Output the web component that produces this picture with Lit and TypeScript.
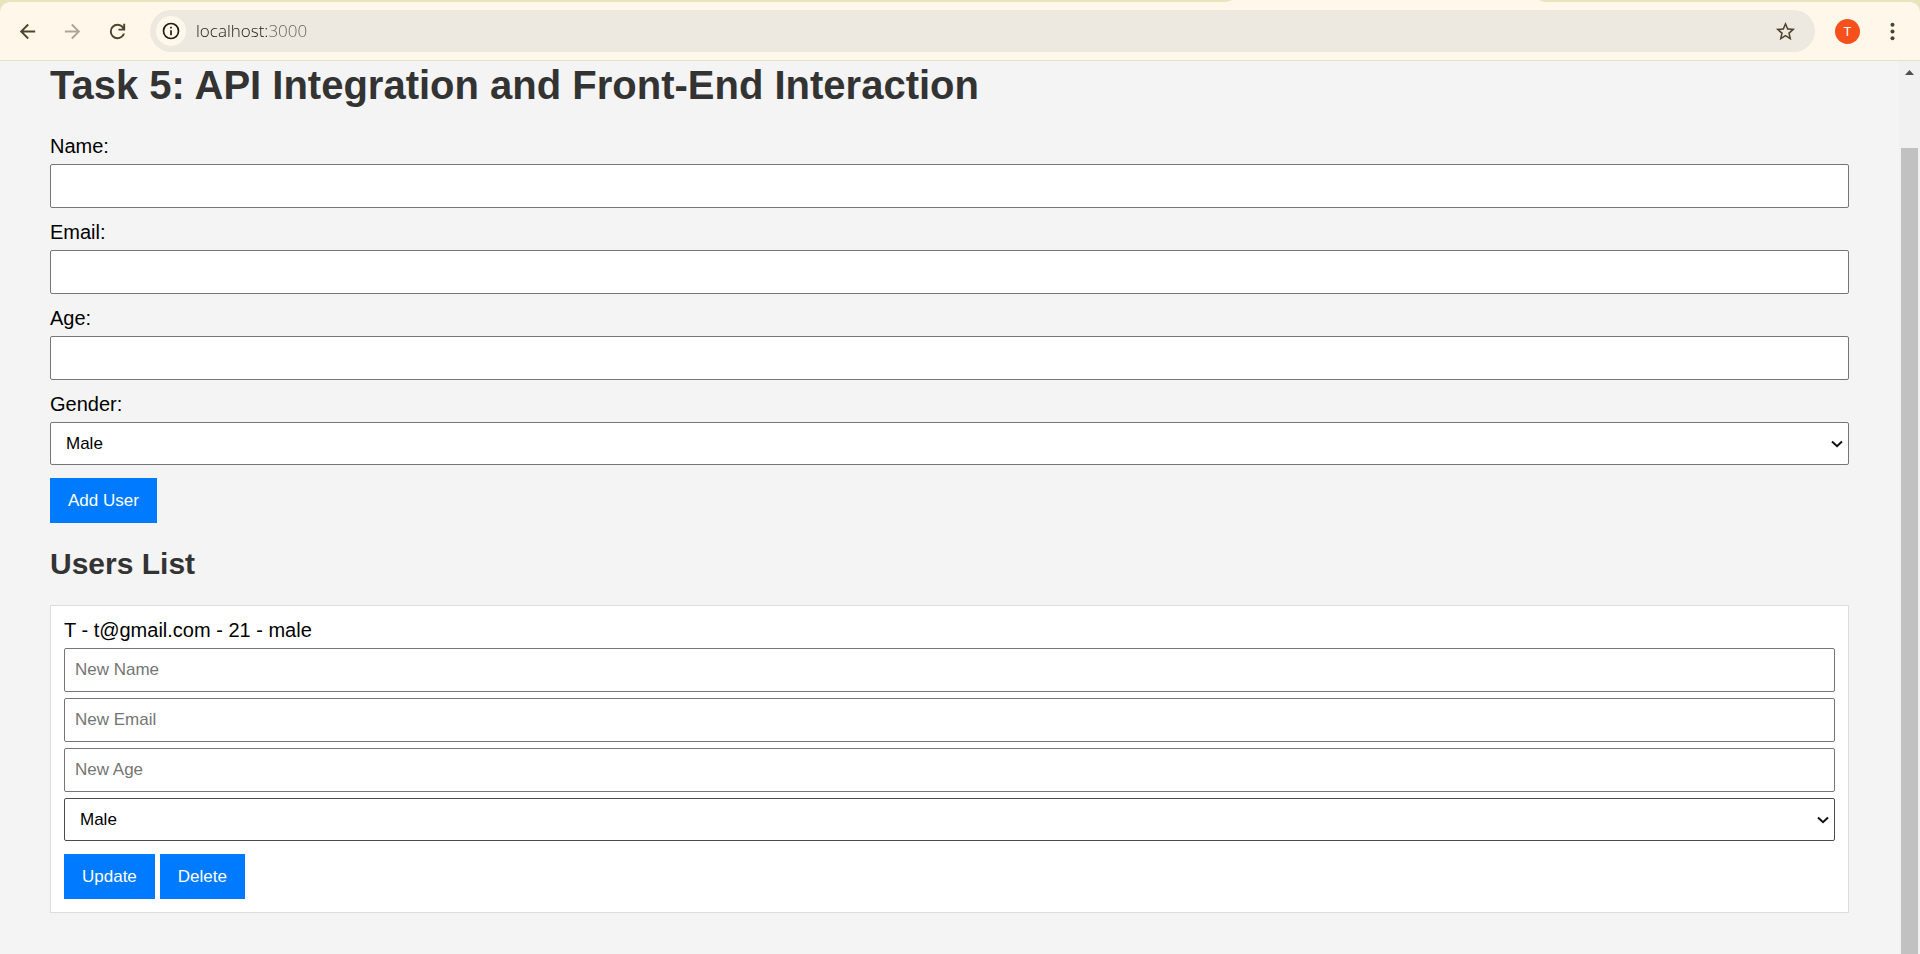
import { LitElement, html, css } from "lit";
import { customElement, property } from "lit/decorators.js";

interface User {
  name: string;
  email: string;
  age: number;
  gender: string;
}

const controls = css`
  * {
    box-sizing: border-box;
  }
  .field {
    display: block;
    width: 100%;
    height: 44px;
    margin: 0;
    padding: 0 10px;
    border: 1px solid #767676;
    border-radius: 2px;
    background: #fff;
    color: #000;
    font: 17px/20px "Liberation Sans", Arial, sans-serif;
  }
  .field::placeholder {
    color: #757575;
  }
  .field.active {
    border-color: #4c4c4c;
  }
  .picker {
    display: grid;
    align-items: center;
  }
  .picker > * {
    grid-area: 1 / 1;
  }
  .picker .field {
    appearance: none;
    height: 43px;
    padding: 0 32px 0 15px;
  }
  .picker svg {
    justify-self: end;
    width: 12px;
    height: 8px;
    margin-right: 6px;
    pointer-events: none;
  }
  .action {
    height: 45px;
    padding: 0 18px;
    border: 0;
    background: #007bff;
    color: #fff;
    font: 17px/20px "Liberation Sans", Arial, sans-serif;
    cursor: pointer;
  }
`;

const chevron = html`<svg viewBox="0 0 12 8" aria-hidden="true">
  <path d="M1 1.5 6 6.2 11 1.5" fill="none" stroke="#111" stroke-width="2" />
</svg>`;

const genderOptions = html`
  <option value="male">Male</option>
  <option value="female">Female</option>
  <option value="other">Other</option>
`;

@customElement("browser-bar")
export class BrowserBar extends LitElement {
  static styles = css`
    * {
      box-sizing: border-box;
    }
    :host {
      display: block;
      background: #ebe3bd;
    }
    .strip {
      display: flex;
      justify-content: flex-end;
      height: 2px;
      padding-right: 374px;
    }
    .tab {
      display: block;
      width: 322px;
      height: 2px;
    }
    .bar {
      display: flex;
      align-items: center;
      height: 59px;
      padding: 0 10px;
      border-bottom: 1px solid #e6e0c8;
      border-radius: 10px 10px 0 0;
      background: #fff8ea;
    }
    .nav {
      display: flex;
      gap: 10px;
    }
    .icon {
      display: grid;
      place-items: center;
      width: 35px;
      height: 35px;
      padding: 0;
      border: 0;
      background: none;
      color: #4c452b;
    }
    .icon:disabled {
      color: #aba794;
    }
    .icon svg {
      width: 23px;
      height: 23px;
      fill: currentColor;
    }
    .address {
      display: flex;
      flex: 1;
      align-items: center;
      height: 42px;
      margin: 0 20px 0 15px;
      padding: 0 12px 0 6px;
      border-radius: 21px;
      background: #ede8e0;
    }
    .address .info {
      width: 30px;
      height: 30px;
      border-radius: 50%;
      background: #fff8ea;
      color: #1f1b12;
    }
    .info svg {
      width: 20px;
      height: 20px;
    }
    .url {
      flex: 1;
      min-width: 0;
      margin-left: 10px;
      padding: 0;
      border: 0;
      outline: 0;
      background: linear-gradient(90deg, #1f1b12 72px, #625d55 72px) text;
      color: transparent;
      font: 300 17px/24px "Open Sans", "Noto Sans", sans-serif;
    }
    .avatar {
      width: 25px;
      height: 25px;
      margin-right: 15px;
      padding: 0;
      border: 0;
      border-radius: 50%;
      background: #f6511d;
      color: #fff;
      font: 13px/25px Roboto, sans-serif;
    }
  `;

  @property() url = "";

  render() {
    return html`
      <div class="strip">
        <svg class="tab" viewBox="0 0 322 2" aria-hidden="true">
          <path d="M0 2Q5 1.800 8 0H315Q318 1.800 322 2Z" fill="#fff8ea" />
        </svg>
      </div>
      <div class="bar">
        <div class="nav">
          <button class="icon" aria-label="Back">
            <svg viewBox="0 0 24 24">
              <path d="M20 11H7.83l5.59-5.59L12 4l-8 8 8 8 1.41-1.41L7.83 13H20z" />
            </svg>
          </button>
          <button class="icon" aria-label="Forward" disabled>
            <svg viewBox="0 0 24 24">
              <path d="m12 4-1.41 1.41L16.17 11H4v2h12.17l-5.58 5.59L12 20l8-8z" />
            </svg>
          </button>
          <button class="icon" aria-label="Reload">
            <svg viewBox="0 0 24 24">
              <path
                d="M12 20q-3.35 0-5.67-2.33T4 12t2.33-5.67T12 4q1.73 0 3.3.71T18 6.75V4h2v7h-7V9h4.2q-.8-1.4-2.19-2.2T12 6Q9.500 6 7.750 7.750T6 12t1.750 4.250T12 18q1.930 0 3.480-1.100T17.650 14h2.100q-.700 2.650-2.850 4.330T12 20z"
              />
            </svg>
          </button>
        </div>
        <div class="address">
          <button class="icon info" aria-label="View site information">
            <svg viewBox="0 0 24 24">
              <path
                d="M11 7h2v2h-2zm0 4h2v6h-2zm1-9a10 10 0 1 0 0 20 10 10 0 0 0 0-20zm0 18a8 8 0 1 1 0-16 8 8 0 0 1 0 16z"
              />
            </svg>
          </button>
          <input class="url" type="text" aria-label="Address" .value=${this.url} />
          <button class="icon" aria-label="Bookmark this page">
            <svg viewBox="0 0 24 24">
              <path
                d="m22 9.240-7.190-.620L12 2 9.190 8.630 2 9.240l5.460 4.730L5.820 21 12 17.270 18.180 21l-1.630-7.030zM12 15.400l-3.760 2.270 1-4.280-3.320-2.880 4.380-.380L12 6.100l1.710 4.040 4.380.380-3.320 2.880 1 4.280z"
              />
            </svg>
          </button>
        </div>
        <button class="avatar" aria-label="Profile T">T</button>
        <button class="icon" aria-label="Menu">
          <svg viewBox="0 0 24 24">
            <circle cx="12" cy="5" r="2.100" />
            <circle cx="12" cy="12" r="2.100" />
            <circle cx="12" cy="19" r="2.100" />
          </svg>
        </button>
      </div>
    `;
  }
}

@customElement("user-card")
export class UserCard extends LitElement {
  static styles = [
    controls,
    css`
      :host {
        display: block;
      }
      .card {
        display: grid;
        gap: 6px;
        padding: 13px;
        border: 1px solid #ddd;
        background: #fff;
      }
      .summary {
        line-height: 23px;
      }
      .actions {
        display: flex;
        gap: 5px;
        padding-top: 7px;
      }
    `,
  ];

  @property({ attribute: false }) user!: User;

  render() {
    const { name, email, age, gender } = this.user;
    return html`
      <div class="card">
        <div class="summary">${name} - ${email} - ${age} - ${gender}</div>
        <input class="field" type="text" placeholder="New Name" aria-label="New Name" />
        <input class="field" type="email" placeholder="New Email" aria-label="New Email" />
        <input class="field" type="number" placeholder="New Age" aria-label="New Age" />
        <div class="picker">
          <select class="field active" aria-label="New Gender">
            ${genderOptions}
          </select>
          ${chevron}
        </div>
        <div class="actions">
          <button class="action" type="button">Update</button>
          <button class="action" type="button">Delete</button>
        </div>
      </div>
    `;
  }
}

@customElement("app-root")
export class AppRoot extends LitElement {
  static styles = [
    controls,
    css`
      :host {
        display: flex;
        flex-direction: column;
        min-height: 100vh;
        background: #f4f4f4;
        color: #000;
        font: 20px/23px "Liberation Sans", Arial, sans-serif;
      }
      .view {
        display: flex;
        flex: 1;
      }
      .page {
        flex: 1;
        min-width: 0;
        padding: 1px 50px 0;
      }
      .title,
      .subtitle {
        margin: 0;
        color: #333;
        font-weight: bold;
      }
      .title {
        margin-bottom: 27px;
        font-size: 40px;
        line-height: 46px;
      }
      .subtitle {
        margin: 23px 0 24px;
        font-size: 30px;
        line-height: 35px;
      }
      .form {
        display: grid;
        justify-items: start;
        gap: 13px;
      }
      .row {
        display: grid;
        gap: 6px;
        width: 100%;
      }
      .users {
        margin: 0;
        padding: 0;
        list-style: none;
      }
      .scrollbar {
        display: flex;
        flex-direction: column;
        align-items: center;
        width: 21px;
        background: #f1f1f1;
      }
      .scrollbar svg {
        width: 9px;
        height: 5px;
        margin: 9px 0 73px;
      }
      .thumb {
        flex: 1;
        width: 17px;
        background: #c1c1c1;
      }
    `,
  ];

  private users: User[] = [{ name: "T", email: "t@gmail.com", age: 21, gender: "male" }];

  render() {
    return html`
      <browser-bar url="localhost:3000"></browser-bar>
      <div class="view">
        <main class="page">
          <h1 class="title">Task 5: API Integration and Front-End Interaction</h1>
          <form class="form">
            <div class="row">
              <label for="name">Name:</label>
              <input class="field" id="name" type="text" />
            </div>
            <div class="row">
              <label for="email">Email:</label>
              <input class="field" id="email" type="email" />
            </div>
            <div class="row">
              <label for="age">Age:</label>
              <input class="field" id="age" type="number" />
            </div>
            <div class="row">
              <label for="gender">Gender:</label>
              <div class="picker">
                <select class="field" id="gender">
                  ${genderOptions}
                </select>
                ${chevron}
              </div>
            </div>
            <button class="action" type="button">Add User</button>
          </form>
          <h2 class="subtitle">Users List</h2>
          <ul class="users">
            ${this.users.map((user) => html`<li><user-card .user=${user}></user-card></li>`)}
          </ul>
        </main>
        <div class="scrollbar" aria-hidden="true">
          <svg viewBox="0 0 9 5"><path d="M0 5 4.500 0 9 5z" fill="#505050" /></svg>
          <div class="thumb"></div>
        </div>
      </div>
    `;
  }
}
